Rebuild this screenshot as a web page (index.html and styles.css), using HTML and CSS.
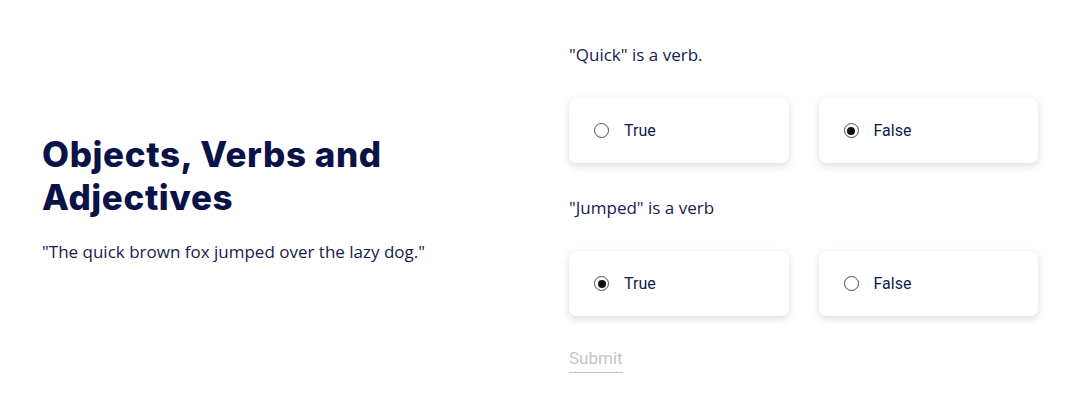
FILE: index.html
```html
<!DOCTYPE html>
<html lang="en">
<head>
<meta charset="utf-8">
<title>Quiz</title>
<link rel="stylesheet" href="styles.css">
</head>
<body>
<main class="page">
  <section class="intro">
    <h1 class="title">Objects, Verbs and Adjectives</h1>
    <p class="quote">"The quick brown fox jumped over the lazy dog."</p>
  </section>
  <form class="quiz">
    <div class="question">
      <p class="prompt">"Quick" is a verb.</p>
      <div class="options">
        <label class="option"><span class="radio"></span><span class="label">True</span></label>
        <label class="option"><span class="radio checked"></span><span class="label">False</span></label>
      </div>
    </div>
    <div class="question">
      <p class="prompt">"Jumped" is a verb</p>
      <div class="options">
        <label class="option"><span class="radio checked"></span><span class="label">True</span></label>
        <label class="option"><span class="radio"></span><span class="label">False</span></label>
      </div>
    </div>
    <div class="actions"><span class="submit">Submit</span></div>
  </form>
</main>
</body>
</html>
```
FILE: styles.css
```css
* { box-sizing: border-box; }
html, body { margin: 0; padding: 0; background: #fff; }
.page {
  display: flex;
  align-items: flex-start;
  height: 418px;
}
.intro {
  width: 569px;
  padding-left: 42px;
  padding-right: 40px;
  padding-top: 133px;
}
.title {
  margin: 0;
  max-width: 420px;
  font-family: "Inter", "DejaVu Sans", sans-serif;
  font-weight: 800;
  font-size: 35px;
  line-height: 43px;
  color: #0b1247;
  letter-spacing: 0.6px;
}
.quote {
  margin: 21px 0 0;
  font-family: "Open Sans", sans-serif;
  font-size: 17px;
  line-height: 24px;
  color: #16214f;
}
.quiz {
  width: 469px;
  padding-top: 43px;
}
.prompt {
  margin: 0;
  font-family: "Open Sans", sans-serif;
  font-size: 17px;
  line-height: 24px;
  color: #16214f;
}
.options {
  display: flex;
  gap: 30px;
  margin-top: 31px;
  margin-bottom: 33px;
}
.option {
  flex: 1;
  height: 65px;
  display: flex;
  align-items: center;
  padding-left: 25px;
  background: #fff;
  border-radius: 7px;
  box-shadow: 0 3px 8px rgba(0,0,0,0.13), 0 0 2px rgba(0,0,0,0.05);
}
.radio {
  width: 15px;
  height: 15px;
  border: 1.5px solid #4a4a4a;
  border-radius: 50%;
  display: flex;
  align-items: center;
  justify-content: center;
  margin-right: 15px;
}
.radio.checked::after {
  content: "";
  width: 8px;
  height: 8px;
  border-radius: 50%;
  background: #111;
}
.label {
  font-family: "Roboto", sans-serif;
  font-size: 16px;
  color: #0e1c4d;
}
.actions {
  margin-top: -2px;
}
.submit {
  display: inline-block;
  font-family: "Roboto", sans-serif;
  font-size: 17px;
  line-height: 22px;
  color: #c4c4c4;
  padding-bottom: 3px;
  border-bottom: 1px solid #bdbdbd;
}
```
